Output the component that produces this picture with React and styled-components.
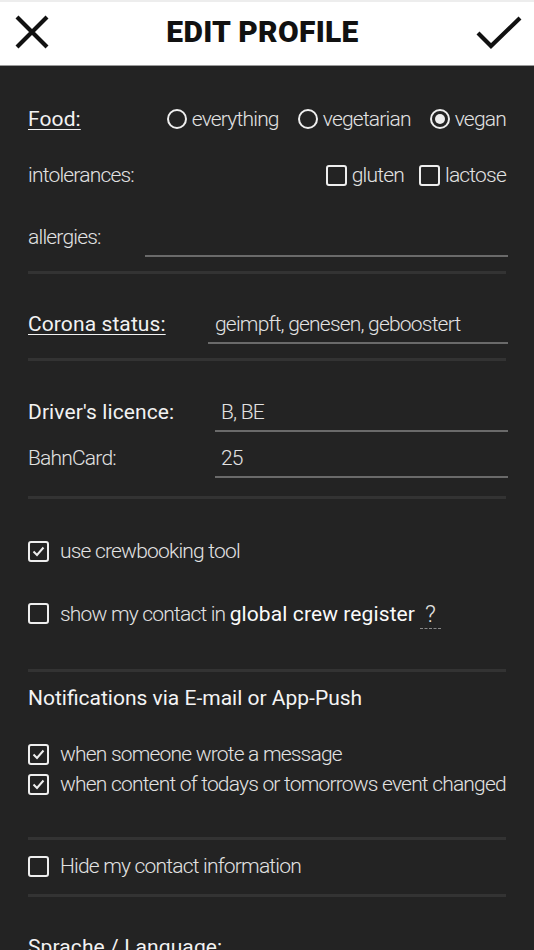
import React from 'react'
import styled, { createGlobalStyle } from 'styled-components'

const GlobalStyle = createGlobalStyle`
    html, body {
        margin: 0;
        padding: 0;
        background-color: #232323;
    }
    body {
        font-family: Roboto, "Liberation Sans", sans-serif;
        color: #ececec;
    }
`

const Page = styled.div`
    width: 534px;
    min-height: 950px;
    background-color: #232323;
`

const Header = styled.div`
    height: 59px;
    background-color: white;
    border-top: 2px solid #ededed;
    border-bottom: 1px solid #9a9a9a;
    display: flex;
    align-items: center;
    padding: 0 12px 4px 15px;
`

const HeaderButton = styled.div`
    display: flex;
    align-items: center;
`

const Title = styled.h1`
    flex: 1;
    margin: 0;
    text-align: center;
    font-family: Roboto, "Liberation Sans", sans-serif;
    font-weight: 900;
    font-size: 30px;
    line-height: 36px;
    color: #111;
    letter-spacing: 0.3px;
`

const Content = styled.div`
    padding: 0 28px 0 28px;
`

const Section = styled.div`
    padding: ${p => p.$pad || '0'};
    border-bottom: ${p => p.$last ? 'none' : '3px solid #333'};
`

const Row = styled.div`
    display: flex;
    align-items: center;
    height: ${p => p.$h || 56}px;
    margin-top: ${p => p.$mt || 0}px;
`

const Label = styled.span`
    font-size: 21px;
    line-height: 26px;
    font-weight: ${p => p.$strong ? 400 : 300};
    color: ${p => p.$strong ? '#f2f2f2' : '#e2e2e2'};
    text-decoration: ${p => p.$underline ? 'underline' : 'none'};
    text-underline-offset: 3px;
    text-decoration-thickness: 1px;
    width: ${p => p.$w ? p.$w + 'px' : 'auto'};
    flex-shrink: 0;
    white-space: nowrap;
    letter-spacing: ${p => p.$strong ? '0.1px' : '-0.8px'};
`

const Options = styled.div`
    margin-left: auto;
    display: flex;
    align-items: center;
    gap: ${p => p.$gap || 20}px;
`

const Option = styled.label`
    display: flex;
    align-items: center;
    gap: 5px;
    font-size: 21px;
    font-weight: 300;
    letter-spacing: -0.8px;
    color: #e2e2e2;
`

const Radio = styled.span`
    width: 20px;
    height: 20px;
    border-radius: 50%;
    border: 2px solid #eee;
    box-sizing: border-box;
    display: flex;
    align-items: center;
    justify-content: center;

    &::after {
        content: '';
        display: ${p => p.$on ? 'block' : 'none'};
        width: 10px;
        height: 10px;
        border-radius: 50%;
        background-color: #eee;
    }
`

const Box = styled.span`
    width: 21px;
    height: 21px;
    border-radius: 3px;
    border: 2px solid #eee;
    box-sizing: border-box;
    flex-shrink: 0;
    display: flex;
    align-items: center;
    justify-content: center;
`

const Field = styled.div`
    flex: 1;
    margin-right: -2px;
    align-self: flex-end;
    border-bottom: 2px solid #6a6a6a;
    height: 36px;
    display: flex;
    align-items: center;
    padding-left: ${p => p.$pl || 7}px;
    padding-bottom: 2px;
    box-sizing: border-box;
    font-size: 21px;
    font-weight: 300;
    letter-spacing: -0.8px;
    color: #e2e2e2;
    margin-bottom: ${p => p.$mb || 0}px;
`

const CheckRow = styled.label`
    display: flex;
    align-items: center;
    gap: 11px;
    height: 30px;
    margin-top: ${p => p.$mt || 0}px;
    font-size: 21px;
    font-weight: 300;
    letter-spacing: -0.8px;
    color: #e2e2e2;
    white-space: nowrap;
`

const Bold = styled.span`
    font-weight: 400;
    color: #fafafa;
    letter-spacing: 0.1px;
`

const Help = styled.span`
    margin-left: 5px;
    position: relative;
    top: 1px;
    font-size: 24px;
    font-weight: 300;
    line-height: 30px;
    border-bottom: 1px dashed #888;
    padding: 0 6px 0 5px;
`

const Heading = styled.div`
    font-size: 21px;
    font-weight: 400;
    line-height: 52px;
    color: #f4f4f4;
    margin-bottom: 15px;
`

const CloseIcon = () => (
    <svg width="34" height="34" viewBox="0 0 34 34">
        <path d="M2 2 L32 32 M32 2 L2 32" stroke="#111" strokeWidth="4.2" fill="none" />
    </svg>
)

const CheckIcon = () => (
    <svg width="46" height="34" viewBox="0 0 46 34">
        <path d="M2 18 L15 31 L44 3" stroke="#111" strokeWidth="4.2" fill="none" />
    </svg>
)

const Tick = () => (
    <svg width="13" height="11" viewBox="0 0 13 11">
        <path d="M1.5 5.5 L5 9 L11.5 1.5" stroke="#eee" strokeWidth="2" fill="none" />
    </svg>
)

const Check = ({ on }) => <Box>{on && <Tick />}</Box>

const App = () => {
    return (
        <Page>
            <GlobalStyle />
            <Header>
                <HeaderButton><CloseIcon /></HeaderButton>
                <Title>EDIT PROFILE</Title>
                <HeaderButton><CheckIcon /></HeaderButton>
            </Header>
            <Content>
                <Section $pad="25px 0 0 0">
                    <Row $h={56}>
                        <Label $strong $underline>Food:</Label>
                        <Options $gap={19}>
                            <Option><Radio />everything</Option>
                            <Option><Radio />vegetarian</Option>
                            <Option><Radio $on />vegan</Option>
                        </Options>
                    </Row>
                    <Row $h={56}>
                        <Label>intolerances:</Label>
                        <Options $gap={15}>
                            <Option><Check />gluten</Option>
                            <Option><Check />lactose</Option>
                        </Options>
                    </Row>
                    <Row $h={68}>
                        <Label $w={117}>allergies:</Label>
                        <Field $mb={14} />
                    </Row>
                </Section>
                <Section $pad="30px 0 14px 0">
                    <Row $h={40}>
                        <Label $strong $underline $w={180}>Corona status:</Label>
                        <Field>geimpft, genesen, geboostert</Field>
                    </Row>
                </Section>
                <Section $pad="31px 0 18px 0">
                    <Row $h={40}>
                        <Label $strong $w={187}>Driver's licence:</Label>
                        <Field $pl={6}>B, BE</Field>
                    </Row>
                    <Row $h={40} $mt={6}>
                        <Label $w={187}>BahnCard:</Label>
                        <Field $pl={6}>25</Field>
                    </Row>
                </Section>
                <Section $pad="37px 0 41px 0">
                    <CheckRow><Check on /><span>use crewbooking tool</span></CheckRow>
                    <CheckRow $mt={32}>
                        <Check />
                        <span>show my contact in <Bold>global crew register</Bold><Help>?</Help></span>
                    </CheckRow>
                </Section>
                <Section $pad="0 0 38px 0">
                    <Heading>Notifications via E-mail or App-Push</Heading>
                    <CheckRow><Check on /><span>when someone wrote a message</span></CheckRow>
                    <CheckRow><Check on /><span>when content of todays or tomorrows event changed</span></CheckRow>
                </Section>
                <Section $pad="11px 0 13px 0">
                    <CheckRow><Check /><span>Hide my contact information</span></CheckRow>
                </Section>
                <Section $last $pad="37px 0 0 0">
                    <Label $strong>Sprache / Language:</Label>
                </Section>
            </Content>
        </Page>
    )
}

export default App
